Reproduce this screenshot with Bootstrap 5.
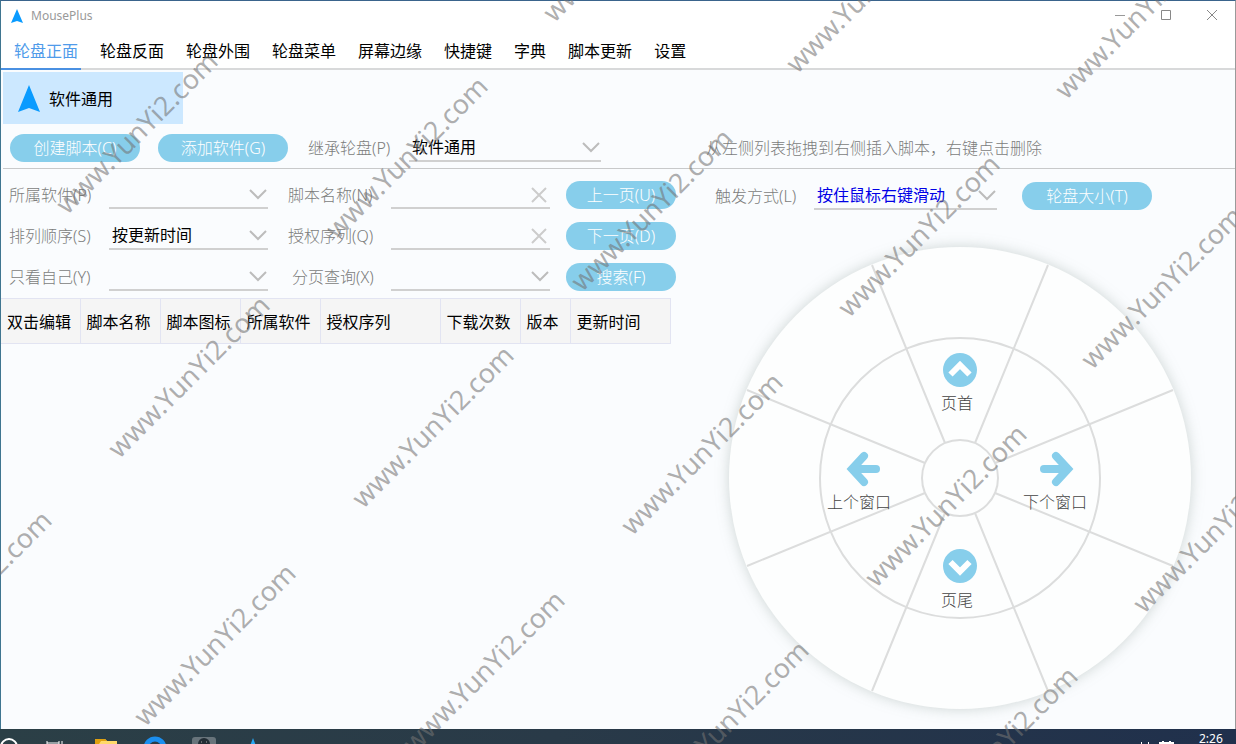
<!DOCTYPE html>
<html lang="zh-CN">
<head>
<meta charset="utf-8">
<meta name="viewport" content="width=device-width, initial-scale=1">
<title>MousePlus</title>
<link href="https://cdn.jsdelivr.net/npm/bootstrap@5.3.0/dist/css/bootstrap.min.css" rel="stylesheet">
<style>
:root{--sky:#87ceeb;--rule:#d0d0d0;--soft:#7c7c7c}
body{font-family:"Noto Sans","Noto Sans CJK SC",sans-serif;font-size:16px;line-height:24px;color:#000;background:#fafcfe;overflow:hidden}
.app-window{border-left:1px solid #3f7590;border-top:1px solid #3a648c;border-right:1px solid #9a9a9a;min-height:0}
.title-bar{height:30px;background:#fff;font-size:12px;line-height:16px;color:#999;padding-left:10px}
.win-btn{width:46px;height:28px;border:0;background:none;padding:0}
.win-btn svg{display:block;margin:0 auto}
.tab-bar{background:#fff;border-bottom:2px solid #d8d9da;height:39px}
.tab-bar .nav-link{color:#000;padding:8px 3px 5px;height:39px;border-bottom:2px solid transparent}
.tab-bar .nav-link.active{color:#4f9bea;border-color:#4a90e2;padding-left:13px}
.app-item{width:180px;height:52px;margin:2px 0 0 2px;background:#cce8ff;border:0;padding:2px 0 0 15px}
.app-item svg{margin-right:9px}
.pill{background:var(--sky);color:#fff;border:0;border-radius:14px;height:28px;line-height:28px;padding:0;width:130px;font-size:16px;font-weight:300}
.pill:hover{background:#74c3e4;color:#fff}
.pill-sm{width:110px}
.soft-label{color:var(--soft);font-weight:300;white-space:nowrap}
.tool-row{padding:10px 0 6px 7px;border-bottom:1px solid #c8c9ca;margin-left:2px}
.add-btn{margin-left:18px}
.inherit-label{margin-left:20px;width:101px}
.inherit-select{width:192px}
.tool-hint{margin-left:105px}
.line-field{border:0;border-bottom:2px solid var(--rule);background-color:transparent;border-radius:0;height:28px;padding:0 0 0 3px;color:#000;min-width:0;line-height:24px}
.line-select{appearance:none;background:url("data:image/svg+xml,%3Csvg xmlns='http://www.w3.org/2000/svg' width='18' height='11'%3E%3Cpath d='M1 1l8 8 8-8' fill='none' stroke='%23bcbcbc' stroke-width='2'/%3E%3C/svg%3E") no-repeat right 1px center}
.line-field input{border:0;outline:0;background:none;min-width:0}
.line-field button{border:0;background:none;padding:0 3px 0 0;line-height:1}
.list-pane{width:683px}
.filter-grid{display:grid;grid-template-columns:100px 159px 123px 159px 126px;row-gap:13px;padding:12px 0 7px 8px;align-items:center}
.filter-grid .second{padding-left:20px}
.filter-grid .pill{margin-left:16px}
.script-table{width:670px;table-layout:fixed;margin:0}
.script-table th{font-weight:400;background:#f5f5f5;border:1px solid #e2e4f2;border-left:0;padding:10px 0 9px 6px;height:45px;white-space:nowrap}
.wheel-tools{padding:13px 0 0 31px}
.trigger-label{width:99px}
.trigger-select{width:183px;color:#0000e6}
.size-btn{margin-left:25px}
.wheel-svg{width:480px;height:486px;overflow:visible;margin-top:28px}
.wheel-disc{filter:drop-shadow(0 0 7px rgba(90,110,100,.28))}
.wheel-svg text{font-size:16px;font-weight:300;fill:#444;text-anchor:middle}
.task-strip{height:15px;background:linear-gradient(90deg,#2b3f46,#293a48 45%,#20304c);color:#fff;font-size:12px;line-height:20px;overflow:hidden}
.clock{width:37px}
.stamps{font-size:27px;fill:rgba(115,115,115,.58);pointer-events:none;text-anchor:middle}
</style>
</head>
<body class="vh-100 d-flex flex-column">
<div class="app-window flex-grow-1 d-flex flex-column">
  <header class="title-bar d-flex align-items-center">
    <svg width="12" height="14" viewBox="0 0 12 14" aria-hidden="true"><path d="M6 0L12 14L6 12L0 14Z" fill="#0a9bff"/></svg>
    <span class="ms-2">MousePlus</span>
    <div class="ms-auto d-flex align-self-start">
      <button class="win-btn" aria-label="最小化"><svg width="12" height="12"><path d="M1 6.500h10" stroke="#999"/></svg></button>
      <button class="win-btn" aria-label="最大化"><svg width="12" height="12"><path d="M1.500 1.500h9v9h-9z" fill="none" stroke="#888"/></svg></button>
      <button class="win-btn" aria-label="关闭"><svg width="12" height="12"><path d="M1 1l10 10M11 1L1 11" stroke="#888"/></svg></button>
    </div>
  </header>
  <nav class="tab-bar nav flex-nowrap gap-3">
    <a class="nav-link active" href="#">轮盘正面</a>
    <a class="nav-link" href="#">轮盘反面</a>
    <a class="nav-link" href="#">轮盘外围</a>
    <a class="nav-link" href="#">轮盘菜单</a>
    <a class="nav-link" href="#">屏幕边缘</a>
    <a class="nav-link" href="#">快捷键</a>
    <a class="nav-link" href="#">字典</a>
    <a class="nav-link" href="#">脚本更新</a>
    <a class="nav-link" href="#">设置</a>
  </nav>
  <button class="app-item d-flex align-items-center">
    <svg width="22" height="28" viewBox="0 0 22 28" aria-hidden="true"><path d="M11 0L22 27L11 23L0 27Z" fill="#0a9bff"/></svg>
    <span>软件通用</span>
  </button>
  <div class="tool-row d-flex align-items-center">
    <button class="btn pill">创建脚本(C)</button>
    <button class="btn pill add-btn">添加软件(G)</button>
    <label class="soft-label inherit-label" for="inherit">继承轮盘(P)</label>
    <select class="line-field line-select inherit-select" id="inherit"><option>软件通用</option></select>
    <span class="soft-label tool-hint">从左侧列表拖拽到右侧插入脚本，右键点击删除</span>
  </div>
  <main class="d-flex flex-grow-1">
    <section class="list-pane flex-shrink-0">
      <form class="filter-grid">
        <label class="soft-label" for="soft">所属软件(P)</label>
        <select class="line-field line-select" id="soft"><option></option></select>
        <label class="soft-label second" for="name">脚本名称(N)</label>
        <div class="line-field d-flex"><input class="flex-grow-1" id="name" type="text"><button type="button" aria-label="清除名称"><svg width="16" height="16"><path d="M1 1l14 14M15 1L1 15" stroke="#ccc" stroke-width="2"/></svg></button></div>
        <button type="button" class="btn pill pill-sm">上一页(U)</button>

        <label class="soft-label" for="order">排列顺序(S)</label>
        <select class="line-field line-select" id="order"><option>按更新时间</option></select>
        <label class="soft-label second" for="serial">授权序列(Q)</label>
        <div class="line-field d-flex"><input class="flex-grow-1" id="serial" type="text"><button type="button" aria-label="清除序列"><svg width="16" height="16"><path d="M1 1l14 14M15 1L1 15" stroke="#ccc" stroke-width="2"/></svg></button></div>
        <button type="button" class="btn pill pill-sm">下一页(D)</button>

        <label class="soft-label" for="mine">只看自己(Y)</label>
        <select class="line-field line-select" id="mine"><option></option></select>
        <label class="soft-label second ps-4" for="page">分页查询(X)</label>
        <select class="line-field line-select" id="page"><option></option></select>
        <button type="button" class="btn pill pill-sm">搜索(F)</button>
      </form>
      <table class="script-table">
        <colgroup><col width="79"><col width="80"><col width="80"><col width="80"><col width="120"><col width="80"><col width="50"><col></colgroup>
        <thead><tr><th>双击编辑</th><th>脚本名称</th><th>脚本图标</th><th>所属软件</th><th>授权序列</th><th>下载次数</th><th>版本</th><th>更新时间</th></tr></thead>
      </table>
    </section>
    <section class="flex-grow-1">
      <div class="wheel-tools d-flex align-items-center">
        <label class="soft-label trigger-label" for="trigger">触发方式(L)</label>
        <select class="line-field line-select trigger-select" id="trigger"><option>按住鼠标右键滑动</option></select>
        <button class="btn pill size-btn">轮盘大小(T)</button>
      </div>
      <div class="d-flex justify-content-center">
        <svg class="wheel-svg" viewBox="-240 -240 480 486">
          <circle class="wheel-disc" r="231" fill="#fdfefe"/>
          <g fill="none" stroke="#dcdddd" stroke-width="2">
            <circle r="140"/><circle r="38"/>
            <path d="M35 15L213 88M15 35L88 213M-15 35L-88 213M-35 15L-213 88M-35-15L-213-88M-15-35L-88-213M15-35L88-213M35-15L213-88"/>
          </g>
          <g fill="#87ceeb">
            <circle cy="-108" r="17"/><circle cy="88" r="17"/>
          </g>
          <g fill="none" stroke="#fff" stroke-width="6">
            <path d="M-9.500-103.500L0-113L9.500-103.500M-9.500 84L0 93.500L9.500 84"/>
          </g>
          <g id="arrow-right" fill="none" stroke="#87ceeb" stroke-width="8">
            <path d="M84-9h20" stroke-linecap="round"/><path d="M96-22L108-9L96 4" stroke-linecap="round"/>
          </g>
          <use href="#arrow-right" transform="scale(-1 1)"/>
          <text x="-3" y="-69">页首</text>
          <text x="-3" y="128">页尾</text>
          <text x="-101" y="30">上个窗口</text>
          <text x="95" y="30">下个窗口</text>
        </svg>
      </div>
    </section>
  </main>
</div>
<footer class="task-strip d-flex justify-content-between flex-shrink-0">
  <svg width="270" height="15" aria-hidden="true">
    <circle cx="9" cy="18" r="8" fill="none" stroke="#fff" stroke-width="2"/>
    <path d="M47 12v3M59 12v3M47 14h12M62 12v3" stroke="#fff" fill="none"/>
    <path d="M95 10h10l2 2h10v3H95z" fill="#ffd96a"/><path d="M95 10h10l2 2h-6l-2 3h-4z" fill="#dfa010"/>
    <circle cx="155" cy="19" r="9" fill="none" stroke="#1b8ff0" stroke-width="5"/>
    <rect x="192" y="8" width="24" height="12" rx="3" fill="#68747b"/><circle cx="204" cy="15" r="6" fill="#222d35"/><path d="M201 13h1M206 13h1" stroke="#aaa"/>
    <path d="M253 9l3 8h-6z" fill="#28a8f5"/>
  </svg>
  <div class="d-flex">
    <svg width="70" height="15" aria-hidden="true"><path d="M12 14h1M19 14h1M30 14h15M34 12v3M41 12v3" stroke="#fff" stroke-width="2"/></svg>
    <time class="clock">2:26</time>
  </div>
</footer>
<svg class="stamps position-absolute top-0 start-0 w-100 h-100" aria-hidden="true">
  <g id="stamp-group"></g>
</svg>
<script src="https://cdn.jsdelivr.net/npm/bootstrap@5.3.0/dist/js/bootstrap.bundle.min.js"></script>
<script>
/* Diagonal site stamps, one per centre point */
const centres=[[137,133],[407,158],[652,210],[624,-59],[867,-8],[1136,18],[919,236],[1162,288],[189,377],[433,427],[702,454],[946,506],[1214,532],[-29,592],[215,645],[484,672],[728,722],[997,748]];
const group=document.getElementById('stamp-group');
for(const [x,y] of centres){
  const t=document.createElementNS('http://www.w3.org/2000/svg','text');
  t.textContent='www.YunYi2.com';
  t.setAttribute('transform',`translate(${x} ${y}) rotate(-45)`);
  t.setAttribute('y',9);
  group.appendChild(t);
}
</script>
</body>
</html>
